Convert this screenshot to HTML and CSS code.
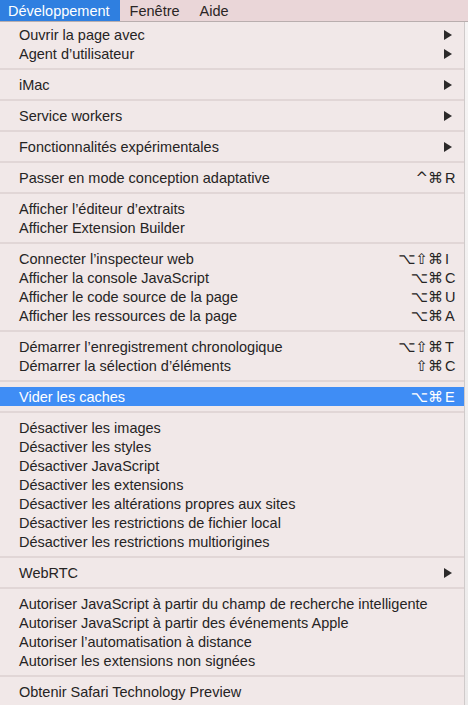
FILE: index.html
```html
<!DOCTYPE html>
<html lang="fr">
<head>
<meta charset="utf-8">
<link rel="stylesheet" href="styles.css">
</head>
<body>
<div class="menubar">
  <span class="bar-item active">Développement</span>
  <span class="bar-item">Fenêtre</span>
  <span class="bar-item">Aide</span>
</div>
<div class="stage">
<div class="menu">
  <div class="item"><span class="label">Ouvrir la page avec</span><span class="arrow"></span></div>
  <div class="item"><span class="label">Agent d’utilisateur</span><span class="arrow"></span></div>
  <div class="sep"></div>
  <div class="item"><span class="label">iMac</span><span class="arrow"></span></div>
  <div class="sep"></div>
  <div class="item"><span class="label">Service workers</span><span class="arrow"></span></div>
  <div class="sep"></div>
  <div class="item"><span class="label">Fonctionnalités expérimentales</span><span class="arrow"></span></div>
  <div class="sep"></div>
  <div class="item"><span class="label">Passer en mode conception adaptative</span><span class="keys"><span class="mods">^⌘</span><span class="key">R</span></span></div>
  <div class="sep"></div>
  <div class="item"><span class="label">Afficher l’éditeur d’extraits</span></div>
  <div class="item"><span class="label">Afficher Extension Builder</span></div>
  <div class="sep"></div>
  <div class="item"><span class="label">Connecter l’inspecteur web</span><span class="keys"><span class="mods">⌥⇧⌘</span><span class="key">I</span></span></div>
  <div class="item"><span class="label">Afficher la console JavaScript</span><span class="keys"><span class="mods">⌥⌘</span><span class="key">C</span></span></div>
  <div class="item"><span class="label">Afficher le code source de la page</span><span class="keys"><span class="mods">⌥⌘</span><span class="key">U</span></span></div>
  <div class="item"><span class="label">Afficher les ressources de la page</span><span class="keys"><span class="mods">⌥⌘</span><span class="key">A</span></span></div>
  <div class="sep"></div>
  <div class="item"><span class="label">Démarrer l’enregistrement chronologique</span><span class="keys"><span class="mods">⌥⇧⌘</span><span class="key">T</span></span></div>
  <div class="item"><span class="label">Démarrer la sélection d’éléments</span><span class="keys"><span class="mods">⇧⌘</span><span class="key">C</span></span></div>
  <div class="sep"></div>
  <div class="item selected"><span class="label">Vider les caches</span><span class="keys"><span class="mods">⌥⌘</span><span class="key">E</span></span></div>
  <div class="sep"></div>
  <div class="item"><span class="label">Désactiver les images</span></div>
  <div class="item"><span class="label">Désactiver les styles</span></div>
  <div class="item"><span class="label">Désactiver JavaScript</span></div>
  <div class="item"><span class="label">Désactiver les extensions</span></div>
  <div class="item"><span class="label">Désactiver les altérations propres aux sites</span></div>
  <div class="item"><span class="label">Désactiver les restrictions de fichier local</span></div>
  <div class="item"><span class="label">Désactiver les restrictions multiorigines</span></div>
  <div class="sep"></div>
  <div class="item"><span class="label">WebRTC</span><span class="arrow"></span></div>
  <div class="sep"></div>
  <div class="item"><span class="label">Autoriser JavaScript à partir du champ de recherche intelligente</span></div>
  <div class="item"><span class="label">Autoriser JavaScript à partir des événements Apple</span></div>
  <div class="item"><span class="label">Autoriser l’automatisation à distance</span></div>
  <div class="item"><span class="label">Autoriser les extensions non signées</span></div>
  <div class="sep"></div>
  <div class="item"><span class="label">Obtenir Safari Technology Preview</span></div>
</div>
<div class="behind"></div>
</div>
</body>
</html>
```
FILE: styles.css
```css
html, body {
  margin: 0;
  padding: 0;
}
body {
  width: 468px;
  height: 705px;
  overflow: hidden;
  background: #f3eeee;
  font-family: "Liberation Sans", Arial, "DejaVu Sans", sans-serif;
  font-size: 14.5px;
  color: #262424;
}
.menubar {
  height: 22px;
  display: flex;
  align-items: stretch;
  background: #ead6d8;
  border-bottom: 1px solid #b9aeae;
  box-sizing: border-box;
}
.bar-item {
  display: flex;
  align-items: center;
  padding: 0 10px;
  color: #2a2525;
}
.bar-item.active {
  background: #2f7fe0;
  color: #fff;
  padding: 0 10px 0 8px;
}
.stage {
  display: flex;
  height: 683px;
}
.menu {
  width: 464px;
  flex: none;
  background: #f1e8e8;
  padding-top: 3px;
  box-sizing: border-box;
  box-shadow: 1px 0 0 #d6cfcf;
}
.behind {
  flex: 1;
  background: linear-gradient(#f6f4f4, #eceaea);
  border-left: 1px solid #cfcaca;
}
.item {
  height: 19px;
  display: flex;
  align-items: center;
  padding-left: 19px;
  padding-right: 7px;
  white-space: nowrap;
}
.label {
  flex: 1;
}
.item.selected {
  background: #3f8df5;
  color: #fff;
}
.sep {
  height: 2px;
  margin: 5px 0;
  background: #e1d6d6;
}
.arrow {
  width: 0;
  height: 0;
  border-top: 5px solid transparent;
  border-bottom: 5px solid transparent;
  border-left: 8px solid #2c2a2a;
  margin-right: 5px;
}
.keys {
  display: flex;
  align-items: baseline;
}
.mods {
  font-family: "DejaVu Sans", "Liberation Sans", sans-serif;
  font-size: 15px;
  text-align: right;
}
.key {
  width: 12px;
  font-family: "Liberation Sans", sans-serif;
  font-size: 14.5px;
  text-align: left;
  margin-left: 2px;
}
```
